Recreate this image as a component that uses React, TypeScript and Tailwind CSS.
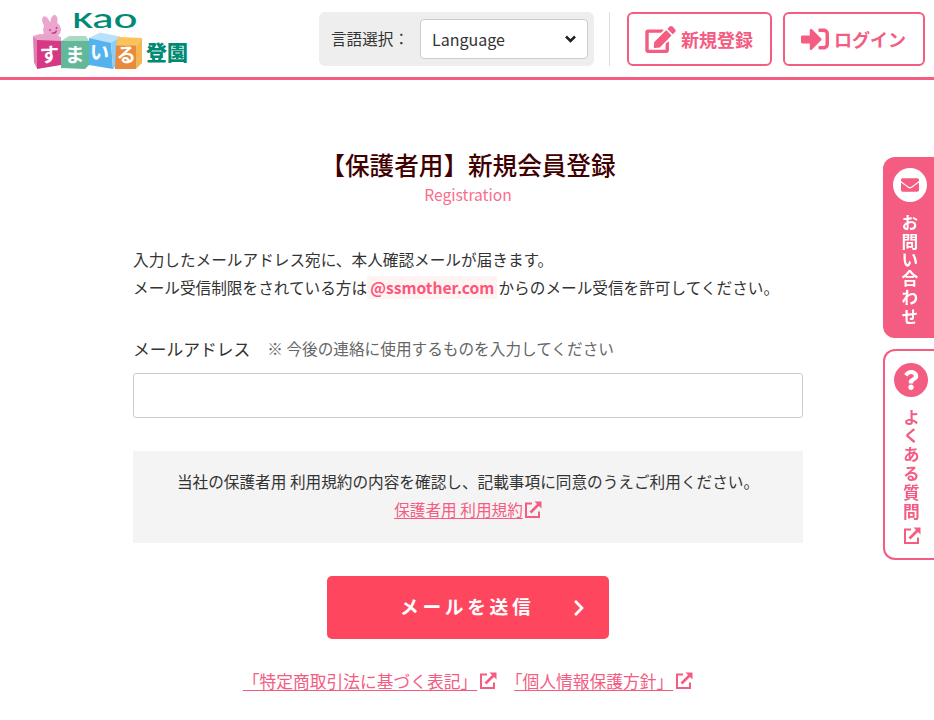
import { FaChevronRight, FaEdit, FaEnvelope, FaQuestion, FaSignInAlt } from "react-icons/fa";

function ExternalIcon({ className }: { className: string }) {
  return (
    <svg viewBox="0 0 18 18" className={className} fill="none">
      <path d="M8 2.500H2v13.500h13V10.500" stroke="currentColor" strokeWidth="2" />
      <path d="M6.500 11.500L14.500 3.500" stroke="currentColor" strokeWidth="2.600" />
      <path d="M10.500 0.500H17.500V7.500Z" fill="currentColor" />
    </svg>
  );
}

function Logo() {
  return (
    <svg viewBox="0 -4 160 76" className="h-[76px] w-40" fontFamily="'Noto Sans CJK JP', sans-serif">
      {/* rabbit */}
      <g fill="#eba5cf">
        <ellipse cx="14" cy="18" rx="3.500" ry="6" transform="rotate(-22 14 18)" />
        <ellipse cx="22" cy="17" rx="3.500" ry="6" transform="rotate(8 22 17)" />
        <path d="M9 34c0-5 4-6 10-5s9 3 9 6z" />
        <ellipse cx="20" cy="25.500" rx="9" ry="8" />
      </g>
      <circle cx="18" cy="26" r="0.900" fill="#c23482" />
      <circle cx="24.500" cy="24" r="0.900" fill="#c23482" />
      <path d="M19.500 29q4 1 5-2.500" stroke="#c23482" strokeWidth="1.200" fill="none" />
      {/* blocks */}
      <path d="M1 32l7-2 21 3v4l-24 0z" fill="#e9a4c9" />
      <path d="M1 32l4 4v28.500l-3-6z" fill="#df7db5" />
      <path d="M5 36l24 1v24l-24 4z" fill="#d63886" />
      <path d="M29 37l8-5h17l3 5z" fill="#a9dac4" />
      <path d="M29 37h28v24l-4 4-24-1z" fill="#62b899" />
      <path d="M57 34l11-5.500 20 4-9 7z" fill="#b9e1fa" />
      <path d="M57 34l22 5 2 26-24-4z" fill="#54b3ee" />
      <path d="M79 39l9-6-3 28-4 4z" fill="#8acdf5" />
      <path d="M84 41.500l2-8.500 24 1-6 8z" fill="#fbc35a" />
      <path d="M84 41.500h20v23.500l-21 0z" fill="#e88b3c" />
      <path d="M104 42l6-8v25l-6 6z" fill="#f4b553" />
      <g fill="#fff" fontSize="19.500" fontWeight="700">
        <text x="7.500" y="57.500">す</text>
        <text x="33" y="57.500">ま</text>
        <text x="57.500" y="55.500" transform="rotate(4 67 50)">い</text>
        <text x="84.500" y="57.500">る</text>
      </g>
      <text x="114" y="56" fill="#008a75" fontSize="21" fontWeight="900" textLength="42">登園</text>
      <g fill="#008a75" fontFamily="Lato, sans-serif">
        <text x="40.500" y="23.500" fontSize="21" fontWeight="700" textLength="20" lengthAdjust="spacingAndGlyphs">K</text>
        <text x="60.500" y="23.500" fontSize="27.500" fontWeight="500" textLength="21" lengthAdjust="spacingAndGlyphs">a</text>
        <text x="81.500" y="23.500" fontSize="27.500" fontWeight="500" textLength="24" lengthAdjust="spacingAndGlyphs">o</text>
      </g>
    </svg>
  );
}

function Header() {
  return (
    <header className="flex h-20 items-start border-b-3 border-[#f45c82] pl-8 pr-[9px]">
      <Logo />
      <div className="ml-auto mt-3 flex h-[54px]">
        <div className="flex w-[275px] items-center rounded-md bg-[#eee] pl-3">
          <span className="w-[89px] text-[15.600px]">言語選択：</span>
          <button className="flex h-10 w-[168px] items-center justify-between rounded border border-[#ccc] bg-white pl-[11px] pr-[11px] text-[16px]">
            Language
            <svg viewBox="0 0 11 8" className="h-2 w-[11px]" fill="none" stroke="#222" strokeWidth="2.600">
              <path d="M1 1.500l4.500 4.500L10 1.500" />
            </svg>
          </button>
        </div>
        <div className="ml-[15px] w-px bg-[#ddd]" />
        <a className="ml-[17px] flex w-[145px] items-center rounded-md border-2 border-[#f45c82] pl-4 text-[18px] font-bold text-[#f45c82]">
          <FaEdit className="mr-[5px] h-[27px] w-[31px]" />
          新規登録
        </a>
        <a className="ml-[11px] flex w-[142px] items-center rounded-md border-2 border-[#f45c82] pl-4 text-[18px] font-bold text-[#f45c82]">
          <FaSignInAlt className="mr-[5px] h-[28px] w-[28px]" />
          ログイン
        </a>
      </div>
    </header>
  );
}

function SideMenu() {
  return (
    <nav className="fixed right-0 top-[157px] flex w-[51px] flex-col gap-[11px]">
      <a className="flex h-[181px] flex-col items-center rounded-l-xl bg-[#f45c82] pl-[2px] pt-[11px] text-white">
        <span className="flex h-[34px] w-[34px] items-center justify-center rounded-full bg-white text-[#f45c82]">
          <FaEnvelope className="h-[18px] w-[18px]" />
        </span>
        <span className="mt-3 text-[16.700px] font-bold leading-none tracking-[2.200px] [writing-mode:vertical-rl]">お問い合わせ</span>
      </a>
      <a className="flex h-[211px] flex-col items-center rounded-l-xl border-2 border-r-0 border-[#f45c82] bg-white pl-[3px] pt-3 text-[#f45c82]">
        <span className="flex h-[34px] w-[34px] items-center justify-center rounded-full bg-[#f45c82] text-white">
          <FaQuestion className="h-5 w-5" />
        </span>
        <span className="mt-3 text-[16.700px] font-bold leading-none tracking-[2.100px] [writing-mode:vertical-rl]">よくある質問</span>
        <ExternalIcon className="mt-[5px] ml-[2px] h-[18px] w-[18px]" />
      </a>
    </nav>
  );
}

export default function App() {
  return (
    <div className="h-[720px] overflow-hidden bg-white font-['Noto_Sans_CJK_JP',sans-serif] text-[#333]">
      <Header />
      <SideMenu />
      <main className="ml-[133px] w-[670px] pt-[65px] text-[15.650px] leading-7">
        <h1 className="text-center text-[24.600px] font-medium leading-[38px] text-[#400000]">【保護者用】新規会員登録</h1>
        <p className="mt-[2px] text-center leading-5 text-[#f96d8d]">Registration</p>
        <p className="mt-[41px]">
          入力したメールアドレス宛に、本人確認メールが届きます。
          <br />
          メール受信制限をされている方は
          <span className="mr-px bg-[#fff4f4] px-[3px] font-bold text-[#ff5478]">@ssmother.com</span>
          からのメール受信を許可してください。
        </p>
        <div className="mt-[33px] flex items-center">
          <label htmlFor="email" className="text-[16.750px]">メールアドレス</label>
          <span className="ml-[17px] text-[#666]">※ 今後の連絡に使用するものを入力してください</span>
        </div>
        <input id="email" className="mt-[10px] block h-[45px] w-full rounded-[3px] border border-[#ccc] px-3" />
        <div className="mt-[33px] h-[92px] bg-[#f4f4f4] pt-[17px] text-center">
          <p>当社の保護者用 利用規約の内容を確認し、記載事項に同意のうえご利用ください。</p>
          <a className="inline-flex items-center text-[#f45c82]">
            <span className="underline underline-offset-2">保護者用 利用規約</span>
            <ExternalIcon className="ml-px h-[18px] w-[18px]" />
          </a>
        </div>
        <button className="mx-auto mt-[33px] flex h-[63px] w-[282px] items-center rounded-[5px] bg-[#ff465f] pb-[3px] pl-[73px] text-[18.700px] font-bold tracking-[3.700px] text-white">
          メールを送信
          <FaChevronRight className="relative top-[2px] ml-[36px] h-[18px] w-[18px]" />
        </button>
        <div className="mt-[28px] flex justify-center gap-[17px] text-[16.750px] text-[#f45c82]">
          <a className="flex items-center">
            <span className="underline underline-offset-2">「特定商取引法に基づく表記」</span>
            <ExternalIcon className="ml-[2px] h-[18px] w-[18px]" />
          </a>
          <a className="flex items-center">
            <span className="underline underline-offset-2 [text-spacing-trim:trim-start]">「個人情報保護方針」</span>
            <ExternalIcon className="ml-[2px] h-[18px] w-[18px]" />
          </a>
        </div>
      </main>
    </div>
  );
}
